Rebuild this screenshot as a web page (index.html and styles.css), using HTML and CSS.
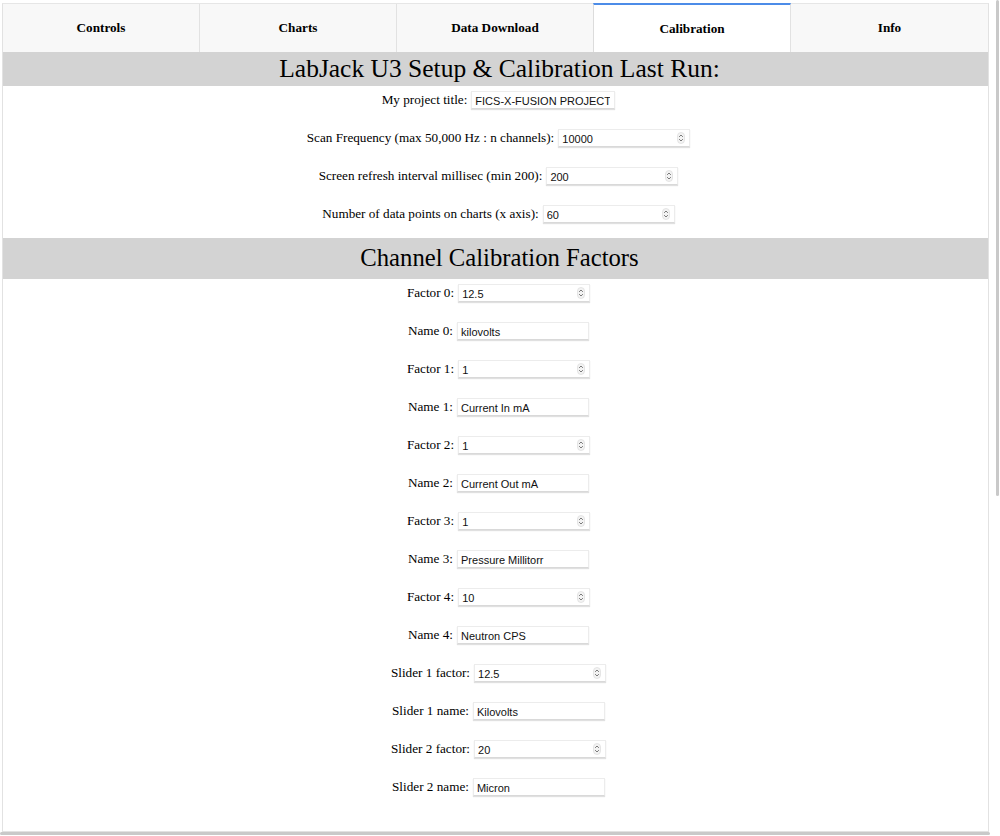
FILE: index.html
```html
<!DOCTYPE html>
<html>
<head>
<meta charset="utf-8">
<title>LabJack U3 Calibration</title>
<link rel="stylesheet" href="styles.css">
</head>
<body>
<div class="panel">
  <nav class="tabs">
    <div class="tab">Controls</div>
    <div class="tab">Charts</div>
    <div class="tab">Data Download</div>
    <div class="tab active">Calibration</div>
    <div class="tab">Info</div>
  </nav>

  <h1 class="band band-top">LabJack U3 Setup &amp; Calibration Last Run:</h1>
  <div class="rows rows-setup">
    <div class="row"><label>My project title:</label><span class="field text wide"><input type="text" value="FICS-X-FUSION PROJECT"></span></div>
    <div class="row"><label>Scan Frequency (max 50,000 Hz : n channels):</label><span class="field num"><input type="text" value="10000"><svg class="spin" viewBox="0 0 8 12"><rect x="0.5" y="0.5" width="7" height="11" rx="3.5" fill="#f3f3f3" stroke="#d6d6d6" stroke-width="0.6"/><path d="M2.4 4.6 L4 3 L5.6 4.6 M2.4 7.4 L4 9 L5.6 7.4" fill="none" stroke="#6b6b6b" stroke-width="0.9" stroke-linecap="round" stroke-linejoin="round"/></svg></span></div>
    <div class="row"><label>Screen refresh interval millisec (min 200):</label><span class="field num"><input type="text" value="200"><svg class="spin" viewBox="0 0 8 12"><rect x="0.5" y="0.5" width="7" height="11" rx="3.5" fill="#f3f3f3" stroke="#d6d6d6" stroke-width="0.6"/><path d="M2.4 4.6 L4 3 L5.6 4.6 M2.4 7.4 L4 9 L5.6 7.4" fill="none" stroke="#6b6b6b" stroke-width="0.9" stroke-linecap="round" stroke-linejoin="round"/></svg></span></div>
    <div class="row"><label>Number of data points on charts (x axis):</label><span class="field num"><input type="text" value="60"><svg class="spin" viewBox="0 0 8 12"><rect x="0.5" y="0.5" width="7" height="11" rx="3.5" fill="#f3f3f3" stroke="#d6d6d6" stroke-width="0.6"/><path d="M2.4 4.6 L4 3 L5.6 4.6 M2.4 7.4 L4 9 L5.6 7.4" fill="none" stroke="#6b6b6b" stroke-width="0.9" stroke-linecap="round" stroke-linejoin="round"/></svg></span></div>
  </div>

  <h2 class="band band-cal">Channel Calibration Factors</h2>
  <div class="rows rows-cal">
    <div class="row"><label>Factor 0:</label><span class="field num"><input type="text" value="12.5"><svg class="spin" viewBox="0 0 8 12"><rect x="0.5" y="0.5" width="7" height="11" rx="3.5" fill="#f3f3f3" stroke="#d6d6d6" stroke-width="0.6"/><path d="M2.4 4.6 L4 3 L5.6 4.6 M2.4 7.4 L4 9 L5.6 7.4" fill="none" stroke="#6b6b6b" stroke-width="0.9" stroke-linecap="round" stroke-linejoin="round"/></svg></span></div>
    <div class="row"><label>Name 0:</label><span class="field text"><input type="text" value="kilovolts"></span></div>
    <div class="row"><label>Factor 1:</label><span class="field num"><input type="text" value="1"><svg class="spin" viewBox="0 0 8 12"><rect x="0.5" y="0.5" width="7" height="11" rx="3.5" fill="#f3f3f3" stroke="#d6d6d6" stroke-width="0.6"/><path d="M2.4 4.6 L4 3 L5.6 4.6 M2.4 7.4 L4 9 L5.6 7.4" fill="none" stroke="#6b6b6b" stroke-width="0.9" stroke-linecap="round" stroke-linejoin="round"/></svg></span></div>
    <div class="row"><label>Name 1:</label><span class="field text"><input type="text" value="Current In mA"></span></div>
    <div class="row"><label>Factor 2:</label><span class="field num"><input type="text" value="1"><svg class="spin" viewBox="0 0 8 12"><rect x="0.5" y="0.5" width="7" height="11" rx="3.5" fill="#f3f3f3" stroke="#d6d6d6" stroke-width="0.6"/><path d="M2.4 4.6 L4 3 L5.6 4.6 M2.4 7.4 L4 9 L5.6 7.4" fill="none" stroke="#6b6b6b" stroke-width="0.9" stroke-linecap="round" stroke-linejoin="round"/></svg></span></div>
    <div class="row"><label>Name 2:</label><span class="field text"><input type="text" value="Current Out mA"></span></div>
    <div class="row"><label>Factor 3:</label><span class="field num"><input type="text" value="1"><svg class="spin" viewBox="0 0 8 12"><rect x="0.5" y="0.5" width="7" height="11" rx="3.5" fill="#f3f3f3" stroke="#d6d6d6" stroke-width="0.6"/><path d="M2.4 4.6 L4 3 L5.6 4.6 M2.4 7.4 L4 9 L5.6 7.4" fill="none" stroke="#6b6b6b" stroke-width="0.9" stroke-linecap="round" stroke-linejoin="round"/></svg></span></div>
    <div class="row"><label>Name 3:</label><span class="field text"><input type="text" value="Pressure Millitorr"></span></div>
    <div class="row"><label>Factor 4:</label><span class="field num"><input type="text" value="10"><svg class="spin" viewBox="0 0 8 12"><rect x="0.5" y="0.5" width="7" height="11" rx="3.5" fill="#f3f3f3" stroke="#d6d6d6" stroke-width="0.6"/><path d="M2.4 4.6 L4 3 L5.6 4.6 M2.4 7.4 L4 9 L5.6 7.4" fill="none" stroke="#6b6b6b" stroke-width="0.9" stroke-linecap="round" stroke-linejoin="round"/></svg></span></div>
    <div class="row"><label>Name 4:</label><span class="field text"><input type="text" value="Neutron CPS"></span></div>
    <div class="row"><label>Slider 1 factor:</label><span class="field num"><input type="text" value="12.5"><svg class="spin" viewBox="0 0 8 12"><rect x="0.5" y="0.5" width="7" height="11" rx="3.5" fill="#f3f3f3" stroke="#d6d6d6" stroke-width="0.6"/><path d="M2.4 4.6 L4 3 L5.6 4.6 M2.4 7.4 L4 9 L5.6 7.4" fill="none" stroke="#6b6b6b" stroke-width="0.9" stroke-linecap="round" stroke-linejoin="round"/></svg></span></div>
    <div class="row"><label>Slider 1 name:</label><span class="field text"><input type="text" value="Kilovolts"></span></div>
    <div class="row"><label>Slider 2 factor:</label><span class="field num"><input type="text" value="20"><svg class="spin" viewBox="0 0 8 12"><rect x="0.5" y="0.5" width="7" height="11" rx="3.5" fill="#f3f3f3" stroke="#d6d6d6" stroke-width="0.6"/><path d="M2.4 4.6 L4 3 L5.6 4.6 M2.4 7.4 L4 9 L5.6 7.4" fill="none" stroke="#6b6b6b" stroke-width="0.9" stroke-linecap="round" stroke-linejoin="round"/></svg></span></div>
    <div class="row"><label>Slider 2 name:</label><span class="field text"><input type="text" value="Micron"></span></div>
  </div>
</div>
<div class="vscroll"></div>
<div class="hscroll"></div>
</body>
</html>
```

FILE: styles.css
```css
html, body {
  margin: 0;
  padding: 0;
  background: #ffffff;
  overflow: hidden;
}

body {
  padding: 3px 11px 0 2px;
  font-family: "Liberation Serif", "Times New Roman", serif;
  color: #000;
}

.panel {
  border: 1px solid #e2e2e2;
  border-top: 1px solid #e6e6e6;
  display: flex;
  flex-direction: column;
  padding-bottom: 35px;
}

.tabs {
  display: grid;
  grid-template-columns: repeat(5, 1fr);
  height: 48px;
}

.tab {
  display: flex;
  align-items: center;
  justify-content: center;
  background: #f8f8f8;
  border-right: 1px solid #e2e2e2;
  font-family: "Liberation Serif", "Times New Roman", serif;
  font-weight: bold;
  font-size: 13.2px;
}

.tab:last-child {
  border-right: none;
}

.tab.active {
  background: #ffffff;
  border-top: 2px solid #4c8ce8;
  margin-top: -1px;
  padding-top: 1px;
  border-left: 1px solid #dcdcdc;
  margin-left: -1px;
}

.band {
  margin: 0;
  background: #d3d3d3;
  font-family: "Liberation Serif", "Times New Roman", serif;
  font-weight: normal;
  text-align: center;
  padding-left: 8px;
}

.band-top {
  height: 34px;
  line-height: 34px;
  font-size: 25.5px;
}

.band-cal {
  height: 41px;
  line-height: 40px;
  margin-top: 15px;
  font-size: 24.7px;
}

.rows {
  display: flex;
  flex-direction: column;
  align-items: center;
  gap: 20px;
  padding-top: 5px;
}

.row {
  display: flex;
  align-items: center;
  height: 18px;
  font-family: "Liberation Serif", "Times New Roman", serif;
  font-size: 13.2px;
  gap: 4px;
  padding-left: 6px;
}

.field {
  display: inline-flex;
  align-items: center;
  height: 18px;
  box-sizing: border-box;
  width: 132px;
  background: #fff;
  border: 1px solid #ececec;
  border-bottom-color: #d9d9d9;
  box-shadow: 0 1px 1px rgba(0, 0, 0, 0.12);
  padding: 0 4px 0 3px;
}

.field.wide {
  width: 144px;
}

.field input {
  flex: 1;
  min-width: 0;
  border: none;
  outline: none;
  padding: 0;
  margin: 0;
  background: transparent;
  font-family: "Liberation Sans", Arial, sans-serif;
  font-size: 11px;
  color: #111;
  height: 14px;
  padding-top: 2px;
}

.spin {
  width: 8px;
  height: 12px;
  flex: none;
}

.vscroll {
  position: fixed;
  top: 0;
  right: 1px;
  width: 3px;
  height: 496px;
  background: #c9c9c9;
  border-radius: 2px;
}

.hscroll {
  position: fixed;
  bottom: 1px;
  left: 0;
  width: 990px;
  height: 3px;
  background: #c9c9c9;
  border-radius: 2px;
}
```
